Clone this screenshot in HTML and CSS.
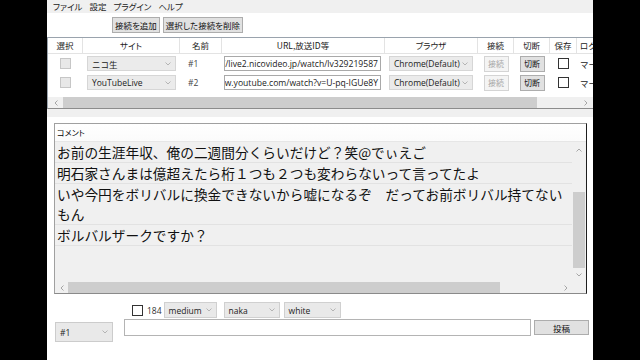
FILE: index.html
```html
<!DOCTYPE html>
<html lang="ja">
<head>
    <meta charset="UTF-8">
    <meta name="viewport" content="width=device-width, initial-scale=1.0">
    <title>コメントビューア</title>
    <link rel="stylesheet" href="styles.css">
</head>
<body>
<div class="app">
    <div class="menubar">
        <span>ファイル</span>
        <span>設定</span>
        <span>プラグイン</span>
        <span>ヘルプ</span>
    </div>

    <div class="toolbar">
        <button class="btn">接続を追加</button>
        <button class="btn">選択した接続を削除</button>
    </div>

    <div class="grid">
        <div class="grid-row grid-head">
            <div>選択</div>
            <div>サイト</div>
            <div>名前</div>
            <div>URL,放送ID等</div>
            <div>ブラウザ</div>
            <div>接続</div>
            <div>切断</div>
            <div>保存</div>
            <div class="head-left">ログ</div>
        </div>
        <div class="grid-row">
            <div class="cell-center"><span class="chk chk-disabled"></span></div>
            <div><div class="combo combo-site"><span>ニコ生</span><svg width="6" height="4" viewBox="0 0 6 4"><path d="M0.5 0.5 L3 3 L5.5 0.5" fill="none" stroke="#b4b4b4"/></svg></div></div>
            <div><div class="name-box">#1</div></div>
            <div><div class="url-box"><span>https://live2.nicovideo.jp/watch/lv329219587</span></div></div>
            <div><div class="combo combo-browser"><span>Chrome(Default)</span><svg width="6" height="4" viewBox="0 0 6 4"><path d="M0.5 0.5 L3 3 L5.5 0.5" fill="none" stroke="#b4b4b4"/></svg></div></div>
            <div class="cell-center"><span class="cell-btn cell-btn-off">接続</span></div>
            <div class="cell-center"><span class="cell-btn">切断</span></div>
            <div class="cell-center"><span class="chk"></span></div>
            <div class="cell-log">マーク</div>
        </div>
        <div class="grid-row">
            <div class="cell-center"><span class="chk chk-disabled"></span></div>
            <div><div class="combo combo-site"><span>YouTubeLive</span><svg width="6" height="4" viewBox="0 0 6 4"><path d="M0.5 0.5 L3 3 L5.5 0.5" fill="none" stroke="#b4b4b4"/></svg></div></div>
            <div><div class="name-box">#2</div></div>
            <div><div class="url-box"><span>https://www.youtube.com/watch?v=U-pq-IGUe8Y</span></div></div>
            <div><div class="combo combo-browser"><span>Chrome(Default)</span><svg width="6" height="4" viewBox="0 0 6 4"><path d="M0.5 0.5 L3 3 L5.5 0.5" fill="none" stroke="#b4b4b4"/></svg></div></div>
            <div class="cell-center"><span class="cell-btn cell-btn-off">接続</span></div>
            <div class="cell-center"><span class="cell-btn">切断</span></div>
            <div class="cell-center"><span class="chk"></span></div>
            <div class="cell-log">マーク</div>
        </div>
        <div class="grid-spacer"></div>
        <div class="hscroll grid-hscroll">
            <span class="arrow"><svg width="4" height="6" viewBox="0 0 4 6"><path d="M3.5 0.5 L1 3 L3.5 5.5" fill="none" stroke="#a6a6a6"/></svg></span>
            <span class="thumb"></span>
            <span class="track"></span>
            <span class="arrow"><svg width="4" height="6" viewBox="0 0 4 6"><path d="M0.5 0.5 L3 3 L0.5 5.5" fill="none" stroke="#a6a6a6"/></svg></span>
        </div>
    </div>
    <div class="grid-foot"></div>

    <div class="comments">
        <div class="comments-head">コメント</div>
        <div class="comments-body">
            <div class="comment-list">
                <div class="comment">お前の生涯年収、俺の二週間分くらいだけど？笑@でぃえご</div>
                <div class="comment">明石家さんまは億超えたら桁１つも２つも変わらないって言ってたよ</div>
                <div class="comment">いや今円をボリバルに換金できないから嘘になるぞ　だってお前ボリバル持てないもん</div>
                <div class="comment">ボルバルザークですか？</div>
            </div>
            <div class="vscroll">
                <span class="arrow-v"><svg width="6" height="4" viewBox="0 0 6 4"><path d="M0.5 3.5 L3 1 L5.5 3.5" fill="none" stroke="#a6a6a6"/></svg></span>
                <span class="vtrack"></span>
                <span class="vthumb"></span>
                <span class="arrow-v"><svg width="6" height="4" viewBox="0 0 6 4"><path d="M0.5 0.5 L3 3 L5.5 0.5" fill="none" stroke="#a6a6a6"/></svg></span>
            </div>
        </div>
        <div class="comments-foot">
            <div class="hscroll comment-hscroll">
                <span class="arrow"><svg width="4" height="6" viewBox="0 0 4 6"><path d="M3.5 0.5 L1 3 L3.5 5.5" fill="none" stroke="#a6a6a6"/></svg></span>
                <span class="thumb"></span>
                <span class="track"></span>
                <span class="arrow"><svg width="4" height="6" viewBox="0 0 4 6"><path d="M0.5 0.5 L3 3 L0.5 5.5" fill="none" stroke="#a6a6a6"/></svg></span>
            </div>
            <div class="corner"></div>
        </div>
    </div>

    <div class="composer">
        <div class="combo combo-conn"><span>#1</span><svg width="6" height="4" viewBox="0 0 6 4"><path d="M0.5 0.5 L3 3 L5.5 0.5" fill="none" stroke="#b4b4b4"/></svg></div>
        <div class="composer-main">
            <div class="options">
                <span class="chk"></span>
                <span class="opt-label">184</span>
                <div class="combo combo-opt w-size"><span>medium</span><svg width="6" height="4" viewBox="0 0 6 4"><path d="M0.5 0.5 L3 3 L5.5 0.5" fill="none" stroke="#b4b4b4"/></svg></div>
                <div class="combo combo-opt w-pos"><span>naka</span><svg width="6" height="4" viewBox="0 0 6 4"><path d="M0.5 0.5 L3 3 L5.5 0.5" fill="none" stroke="#b4b4b4"/></svg></div>
                <div class="combo combo-opt w-color"><span>white</span><svg width="6" height="4" viewBox="0 0 6 4"><path d="M0.5 0.5 L3 3 L5.5 0.5" fill="none" stroke="#b4b4b4"/></svg></div>
            </div>
            <div class="post-row">
                <div class="post-input"></div>
                <button class="btn btn-post">投稿</button>
            </div>
        </div>
    </div>
</div>
</body>
</html>
```

FILE: styles.css
```css
body { margin: 0; background: #000; font-family: "Open Sans", "Noto Sans CJK JP", sans-serif; }

.app {
    width: 546px;
    height: 360px;
    margin-left: 47px;
    background: #fff;
    overflow: hidden;
    display: flex;
    flex-direction: column;
}

/* menu + toolbar */
.menubar {
    height: 13px;
    background: #f0f0f0;
    display: flex;
    gap: 7px;
    padding-left: 6px;
    font: 8.5px/13px "Noto Sans CJK JP", sans-serif;
    font-feature-settings: "palt";
    color: #222;
}
.toolbar {
    height: 24px;
    box-sizing: border-box;
    padding: 4px 0 0 65px;
    display: flex;
    align-items: flex-start;
    gap: 3px;
}
.btn {
    height: 16px;
    padding: 0 2px;
    background: #e1e1e1;
    border: 1px solid #adadad;
    color: #111;
    font: 8.5px/14px "Noto Sans CJK JP", sans-serif;
    font-feature-settings: "palt";
    cursor: pointer;
}

/* connection grid */
.grid {
    height: 72px;
    box-sizing: border-box;
    border-top: 1px solid #9aa3ad;
    border-left: 1px solid #9aa3ad;
    border-bottom: 1px solid #8c8c8c;
    display: flex;
    flex-direction: column;
    width: 600px;
}
.grid-row {
    display: grid;
    grid-template-columns: 35px 97px 42px 163px 93px 36px 36px 27px 70px;
    height: 19px;
    align-items: center;
    font-size: 8.5px;
    color: #222;
}
.grid-head {
    height: 16px;
    box-sizing: border-box;
    border-bottom: 1px solid #e3e3e3;
    align-items: stretch;
    font: 8.5px/15px "Noto Sans CJK JP", sans-serif;
    font-feature-settings: "palt";
}
.grid-head div { text-align: center; border-right: 1px solid #e3e3e3; }
.grid-head .head-left { text-align: left; padding-left: 3px; border-right: none; }
.cell-center { display: flex; justify-content: center; align-items: center; }

.chk {
    display: inline-block;
    width: 9px;
    height: 9px;
    border: 1px solid #333;
    background: #fff;
}
.chk-disabled { background: #e8e8e8; border-color: #c6c6c6; }

.combo {
    box-sizing: border-box;
    display: flex;
    align-items: center;
    justify-content: space-between;
    background: #ebebeb;
    border: 1px solid #d6d6d6;
    padding: 0 4px;
    font-size: 8.5px;
    color: #222;
}
.combo-site { height: 15px; margin: 0 4px; }
.combo-browser { height: 15px; margin: 0 5px 0 4px; }

.name-box {
    margin-left: 5px;
    width: 31px;
    height: 15px;
    background: #fff;
    padding-left: 3px;
    box-sizing: border-box;
    line-height: 15px;
    color: #444;
}
.url-box {
    height: 15px;
    box-sizing: border-box;
    margin: 0 4px 0 2px;
    border: 1px solid #a9a9a9;
    background: #fff;
    overflow: hidden;
    display: flex;
    justify-content: flex-end;
    align-items: center;
    white-space: nowrap;
    padding-right: 2px;
    font-size: 8.6px;
}
.cell-btn {
    width: 25px;
    height: 16px;
    box-sizing: border-box;
    border: 1px solid #adadad;
    background: #e1e1e1;
    text-align: center;
    font: 8px/14px "Noto Sans CJK JP", sans-serif;
    color: #111;
}
.cell-btn-off { background: #f4f4f4; border-color: #d4d4d4; color: #a8a8a8; }
.cell-log { padding-left: 3px; white-space: nowrap; overflow: hidden; font-family: "Noto Sans CJK JP", sans-serif; }

.grid-spacer { height: 5px; }
.grid-foot { height: 8px; background: #f0f0f0; margin-bottom: 6px; }

/* scrollbars */
.hscroll { display: flex; height: 11px; background: #f0f0f0; align-items: stretch; }
.hscroll .arrow { width: 15px; display: flex; align-items: center; justify-content: center; }
.hscroll .thumb { background: #cdcdcd; }
.hscroll .track { flex: 1; }
.grid-hscroll { width: 545px; }
.grid-hscroll .thumb { width: 474px; }

.vscroll { width: 14px; background: #f0f0f0; display: flex; flex-direction: column; }
.arrow-v { height: 16px; display: flex; align-items: center; justify-content: center; }
.arrow-v:last-child { height: 14px; }
.vtrack { height: 34px; }
.vthumb { height: 76px; margin: 0 1px; background: #cdcdcd; }

/* comment list */
.comments {
    margin-left: 7px;
    width: 533px;
    height: 171px;
    box-sizing: border-box;
    border: 1px solid #a0a0a0;
    border-right-color: #1e1e1e;
    border-bottom-color: #8a8a8a;
    display: flex;
    flex-direction: column;
    background: #f0f0f0;
}
.comments-head {
    height: 18px;
    box-sizing: border-box;
    background: linear-gradient(#fff, #fbfbfb);
    border-bottom: 1px solid #e6e6e6;
    padding-left: 2px;
    font: 8px/17px "Noto Sans CJK JP", sans-serif;
    font-feature-settings: "palt";
}
.comments-body { display: flex; height: 140px; }
.comment-list { flex: 1; overflow: hidden; }
.comment {
    padding-left: 2px;
    border-bottom: 1px solid #e2e2e2;
    font: 13.7px/20px "Noto Sans CJK JP", sans-serif;
    color: #111;
}
.comments-foot { display: flex; }
.comment-hscroll { flex: 1; }
.comment-hscroll .arrow { width: 13px; }
.comment-hscroll .thumb { width: 432px; }
.corner { width: 14px; background: #f0f0f0; }

/* composer */
.composer { display: flex; padding: 8px 0 0 8px; }
.combo-conn { width: 58px; height: 20px; margin-top: 20px; background: #e9e9e9; border-color: #cccccc; }
.composer-main { margin-left: 11px; display: flex; flex-direction: column; }
.options { display: flex; align-items: center; height: 16px; padding-left: 8px; gap: 4px; }
.opt-label { font-size: 8.5px; color: #333; margin-right: -2px; }
.combo-opt { height: 16px; background: #e9e9e9; border-color: #d0d0d0; }
.w-size { width: 53px; }
.w-pos { width: 56px; margin-left: 3px; }
.w-color { width: 57px; }
.post-row { display: flex; align-items: center; gap: 3px; margin-top: 1px; }
.post-input { width: 407px; height: 17px; box-sizing: border-box; border: 1px solid #b4b4b4; background: #fff; }
.btn-post { width: 55px; height: 15px; line-height: 12px; }
```
